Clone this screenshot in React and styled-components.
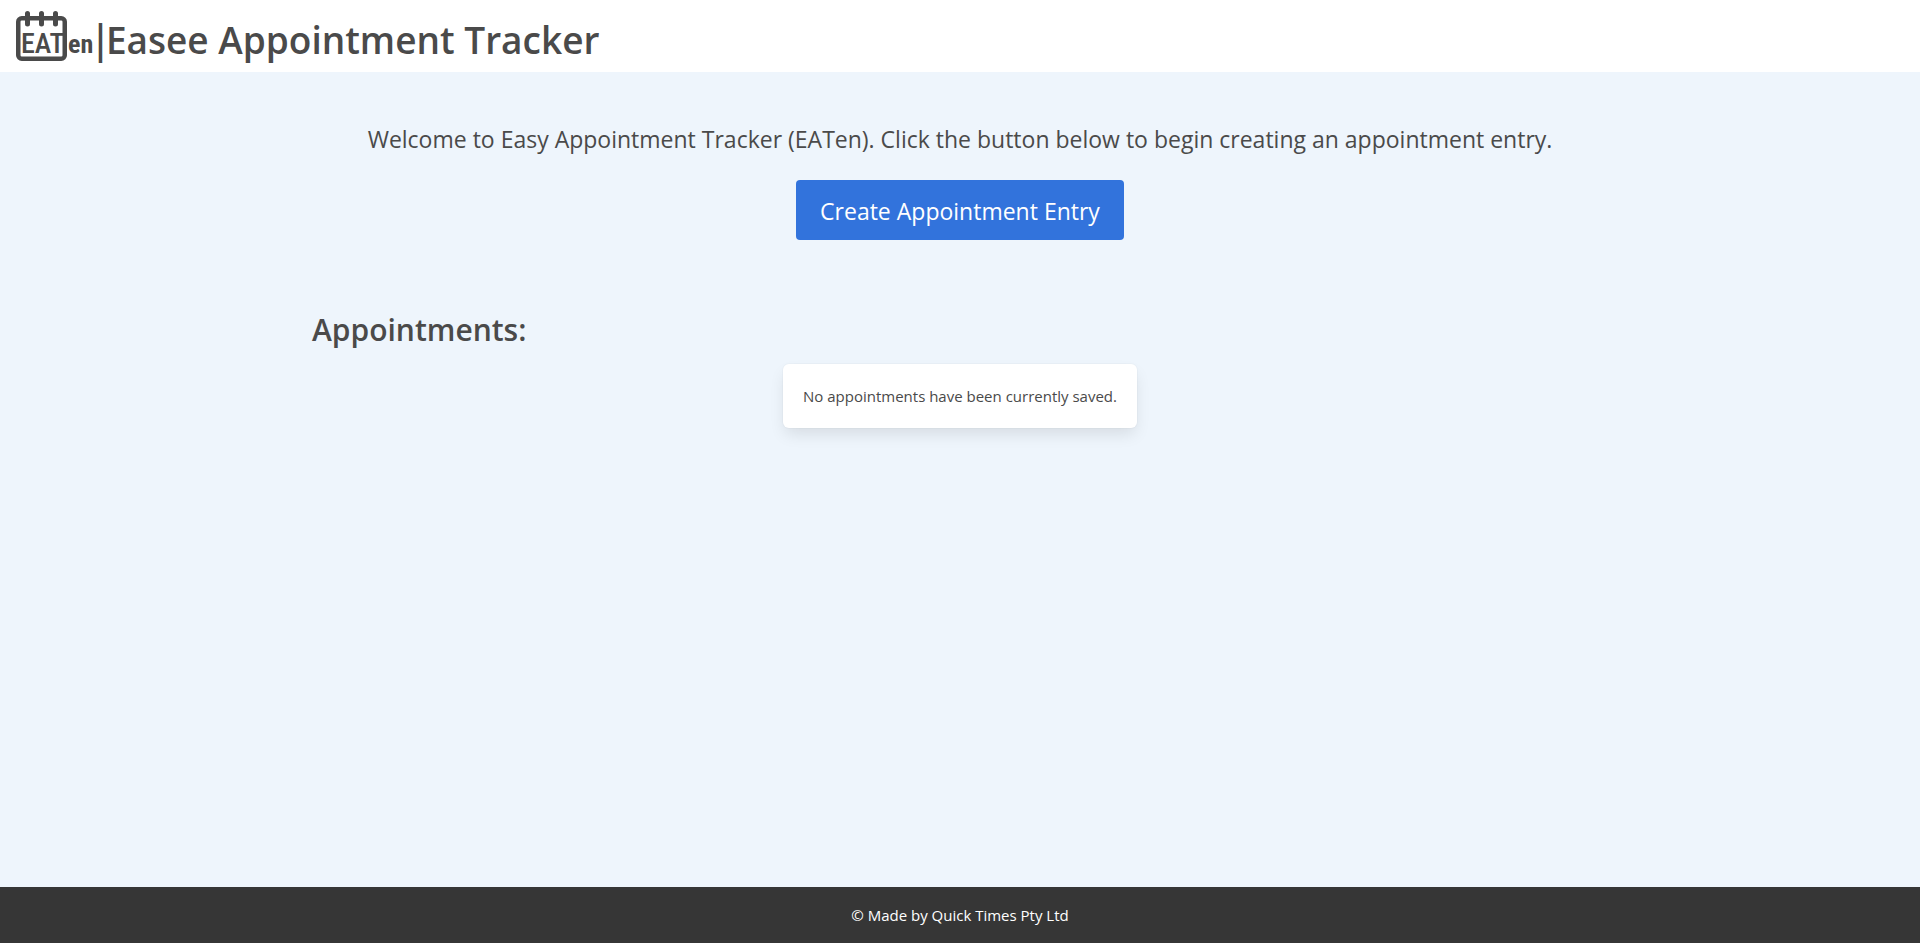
import React from "react";
import styled, { createGlobalStyle } from "styled-components";

const GlobalStyle = createGlobalStyle`
  *, *::before, *::after { box-sizing: border-box; }
  body {
    margin: 0;
    color: #4a4a4a;
    font-family: "Segoe UI", "Open Sans", "Noto Sans", sans-serif;
    font-size: 16px;
    line-height: 24px;
  }
`;

const Page = styled.div`
  display: flex;
  flex-direction: column;
  min-height: 100vh;
  background: #eef5fc;
`;

const Header = styled.header`
  display: flex;
  align-items: center;
  height: 72px;
  padding: 0 16px;
  background: #fff;
`;

const Logo = styled.svg`
  flex: none;
  width: 79px;
  height: 52px;
`;

const LogoText = styled.text`
  font-family: "Roboto Condensed", "Open Sans", sans-serif;
  font-weight: ${({ $weight }) => $weight};
  font-size: ${({ $size }) => $size}px;
  fill: #4a4a4a;
`;

const SiteTitle = styled.h1`
  margin: 0;
  padding-top: 8px;
  font-size: 37px;
  font-weight: 600;
  line-height: 48px;
`;

const Divider = styled.span`
  font-family: "Liberation Sans", sans-serif;
  font-size: 42px;
  font-weight: 400;
`;

const Main = styled.main`
  flex: 1;
`;

const Intro = styled.section`
  display: flex;
  flex-direction: column;
  align-items: center;
  gap: 22px;
  padding: 48px 24px;
`;

const Welcome = styled.p`
  margin: 0;
  font-size: 23px;
  line-height: 38px;
  text-align: center;
`;

const PrimaryButton = styled.button`
  height: 60px;
  padding: 2px 24px 0;
  border: 0;
  border-radius: 4px;
  background: #3273dc;
  color: #fff;
  font: inherit;
  font-size: 23px;
  cursor: pointer;
`;

const Appointments = styled.section`
  display: flex;
  flex-direction: column;
  align-items: center;
  gap: 16px;
  max-width: 1344px;
  margin: 0 auto;
  padding: 24px;
`;

const SectionTitle = styled.h2`
  align-self: flex-start;
  margin: 0;
  font-size: 30px;
  font-weight: 600;
  line-height: 36px;
`;

const Card = styled.div`
  padding: 20px;
  border-radius: 6px;
  background: #fff;
  box-shadow: 0 8px 16px -2px rgba(10, 10, 10, 0.1), 0 0 0 1px rgba(10, 10, 10, 0.02);
  font-size: 15px;
`;

const Footer = styled.footer`
  padding: 16px;
  background: #363636;
  color: #fff;
  font-size: 15px;
  text-align: center;
`;

export default function App() {
  return (
    <Page>
      <GlobalStyle />
      <Header>
        <Logo viewBox="0 0 79 52" role="img" aria-label="EATen">
          <rect x="2.25" y="8.25" width="46.5" height="40.5" rx="3.5" fill="none" stroke="#4a4a4a" strokeWidth="4.5" />
          <path d="M11.5 3.5V14M25.5 3.5V14M39.5 3.5V14" stroke="#4a4a4a" strokeWidth="5" strokeLinecap="round" />
          <LogoText $size={28} $weight={500} x="5" y="43">EAT</LogoText>
          <LogoText $size={26} $weight={700} x="52" y="43">en</LogoText>
        </Logo>
        <SiteTitle><Divider>|</Divider>Easee Appointment Tracker</SiteTitle>
      </Header>
      <Main>
        <Intro>
          <Welcome>
            Welcome to Easy Appointment Tracker (EATen). Click the button below to begin creating an appointment entry.
          </Welcome>
          <PrimaryButton type="button">Create Appointment Entry</PrimaryButton>
        </Intro>
        <Appointments>
          <SectionTitle>Appointments:</SectionTitle>
          <Card>No appointments have been currently saved.</Card>
        </Appointments>
      </Main>
      <Footer>© Made by Quick Times Pty Ltd</Footer>
    </Page>
  );
}
